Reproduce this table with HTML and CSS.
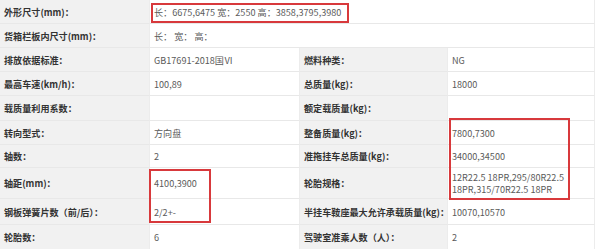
FILE: index.html
```html
<!DOCTYPE html>
<html lang="zh-CN">
<head>
<meta charset="utf-8">
<title>参数</title>
<link rel="stylesheet" href="styles.css">
</head>
<body>
<div class="sheet">
  <div class="grid">
    <div class="lbl">外形尺寸(mm)：</div>
    <div class="val wide">长：6675,6475 宽：2550 高：3858,3795,3980</div>

    <div class="lbl">货箱栏板内尺寸(mm)：</div>
    <div class="val wide">长： 宽： 高：</div>

    <div class="lbl">排放依据标准：</div>
    <div class="val">GB17691-2018国Ⅵ</div>
    <div class="lbl">燃料种类：</div>
    <div class="val">NG</div>

    <div class="lbl">最高车速(km/h)：</div>
    <div class="val">100,89</div>
    <div class="lbl">总质量(kg)：</div>
    <div class="val">18000</div>

    <div class="lbl">载质量利用系数：</div>
    <div class="val"></div>
    <div class="lbl">额定载质量(kg)：</div>
    <div class="val"></div>

    <div class="lbl">转向型式：</div>
    <div class="val">方向盘</div>
    <div class="lbl">整备质量(kg)：</div>
    <div class="val">7800,7300</div>

    <div class="lbl">轴数：</div>
    <div class="val">2</div>
    <div class="lbl">准拖挂车总质量(kg)：</div>
    <div class="val">34000,34500</div>

    <div class="lbl">轴距(mm)：</div>
    <div class="val">4100,3900</div>
    <div class="lbl">轮胎规格：</div>
    <div class="val multi">12R22.5 18PR,295/80R22.5 18PR,315/70R22.5 18PR</div>

    <div class="lbl">钢板弹簧片数（前/后）：</div>
    <div class="val">2/2+-</div>
    <div class="lbl">半挂车鞍座最大允许承载质量(kg)：</div>
    <div class="val">10070,10570</div>

    <div class="lbl">轮胎数：</div>
    <div class="val">6</div>
    <div class="lbl">驾驶室准乘人数（人）：</div>
    <div class="val">2</div>
  </div>
  <div class="mark mark-size"></div>
  <div class="mark mark-mass"></div>
  <div class="mark mark-axle"></div>
</div>
</body>
</html>
```

FILE: styles.css
```css
html, body {
  margin: 0;
  padding: 0;
  background: #ffffff;
}

.sheet {
  position: relative;
  width: 600px;
  height: 249px;
  overflow: hidden;
  font-family: "Noto Sans CJK SC", "Noto Sans", sans-serif;
  font-size: 9.1px;
}

.grid {
  display: grid;
  grid-template-columns: 150px 150px 148px 147px;
  grid-template-rows: 24px 24px 24px 24px 25px 24px 23px 31px 26px 25px;
}

.lbl,
.val {
  box-sizing: border-box;
  display: flex;
  align-items: center;
  padding: 0 4px;
  border-bottom: 1px solid #e8e8e8;
  border-right: 1px solid #ececec;
  white-space: nowrap;
}

.lbl {
  background: #f1f1f1;
  color: #333333;
  font-weight: 700;
}

.val {
  background: #ffffff;
  color: #5a5a5a;
}

.wide {
  grid-column: span 3;
}

.multi {
  white-space: normal;
  line-height: 12px;
  padding-right: 20px;
}

.mark {
  position: absolute;
  box-sizing: border-box;
  border: 2px solid #d8393c;
}

.mark-size {
  left: 151px;
  top: 3px;
  width: 198px;
  height: 20px;
}

.mark-mass {
  left: 449px;
  top: 118px;
  width: 121px;
  height: 82px;
}

.mark-axle {
  left: 149px;
  top: 169px;
  width: 62px;
  height: 54px;
}
```
